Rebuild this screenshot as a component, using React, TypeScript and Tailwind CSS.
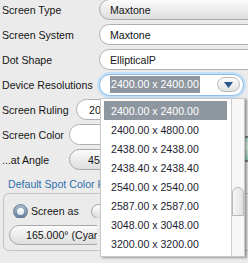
import React from "react";

const items = [
  "2400.00 x 2400.00",
  "2400.00 x 4800.00",
  "2438.00 x 2438.00",
  "2438.40 x 2438.40",
  "2540.00 x 2540.00",
  "2587.00 x 2587.00",
  "3048.00 x 3048.00",
  "3200.00 x 3200.00",
];

function Label({ children, w }: { children: React.ReactNode; w: string }) {
  return <span className={`${w} shrink-0 pl-[2px] whitespace-nowrap`}>{children}</span>;
}

export default function App() {
  return (
    <div className="relative w-[248px] h-[263px] overflow-hidden bg-[#ebebeb] text-[10.6px] leading-[14px] text-[#151515] font-['Liberation_Sans',Arial,sans-serif]">
      {/* background content partly hidden by the list */}
      <div className="absolute left-[236px] top-[136px] w-[26px] h-[26px] rounded-full border border-[#333] bg-[radial-gradient(circle_at_40%_40%,#e8f6e8,#9ed6c8_60%,#6cb8c8)]" />

      <div className="flex flex-col gap-[4px] -mt-px">
        <div className="flex items-center h-[21px]">
          <Label w="w-[99px]">Screen Type</Label>
          <div className="w-[170px] shrink-0 h-full rounded-full border border-[#a8a8a8] bg-gradient-to-b from-[#fbfbfb] to-[#dedede] flex items-center pl-[10px]">
            Maxtone
          </div>
        </div>
        <div className="flex items-center h-[21px]">
          <Label w="w-[99px]">Screen System</Label>
          <div className="w-[170px] shrink-0 h-full rounded-full border border-[#b0b0b0] bg-white flex items-center pl-[10px]">
            Maxtone
          </div>
        </div>
        <div className="flex items-center h-[21px]">
          <Label w="w-[99px]">Dot Shape</Label>
          <div className="w-[170px] shrink-0 h-full rounded-full border border-[#b0b0b0] bg-white flex items-center pl-[10px]">
            EllipticalP
          </div>
        </div>
        <div className="flex items-center h-[21px]">
          <Label w="w-[99px]">Device Resolutions</Label>
          <div className="w-[145px] shrink-0 h-[22px] rounded-full border border-[#8dbde6] shadow-[0_0_0_2px_#c4e0f6] bg-white flex items-center pl-[10px] pr-[3px]">
            <span className="bg-[#8e979f] text-white px-[1px] leading-[17px]">2400.00 x 2400.00</span>
            <div className="ml-auto w-[23px] h-[15px] rounded-full border border-[#b8b8b8] bg-gradient-to-b from-[#fdfdfd] to-[#e2e2e2] flex items-center justify-center">
              <svg width="9" height="6" viewBox="0 0 9 6">
                <path d="M0 0 H9 L4.5 6 Z" fill="#27598c" />
              </svg>
            </div>
          </div>
        </div>
        <div className="flex items-center h-[21px] w-[100px] overflow-hidden">
          <Label w="w-[76px]">Screen Ruling</Label>
          <div className="w-[190px] shrink-0 h-full rounded-full border border-[#b0b0b0] bg-white flex items-center pl-[12px]">
            20
          </div>
        </div>
        <div className="flex items-center h-[21px] w-[100px] overflow-hidden">
          <Label w="w-[69px]">Screen Color</Label>
          <div className="w-[190px] shrink-0 h-full rounded-full border border-[#b0b0b0] bg-white" />
        </div>
        <div className="flex items-center h-[21px] w-[100px] overflow-hidden">
          <Label w="w-[69px]">...at Angle</Label>
          <div className="w-[190px] shrink-0 h-full rounded-full border border-[#a8a8a8] bg-gradient-to-b from-[#fbfbfb] to-[#dedede] flex items-center pl-[18px]">
            45
          </div>
        </div>
      </div>

      <div className="mt-[7px] w-[100px] overflow-hidden pl-[8px] h-[14px] text-[#2e6fad] whitespace-nowrap">Default Spot Color Handling</div>

      <div className="mt-[2px] ml-[3px] w-[300px] h-[58px] rounded-[6px] border border-[#c4c4c4] pt-[10px] pl-[9px]">
        <div className="flex items-center h-[14px] w-[88px] overflow-hidden">
          <div className="w-[15px] h-[15px] shrink-0 rounded-full border border-[#6f8297] bg-gradient-to-b from-[#a9bccd] to-[#5f7c98] flex items-center justify-center">
            <div className="w-[7px] h-[7px] rounded-full bg-gradient-to-b from-white to-[#dfe6ee]" />
          </div>
          <span className="ml-[3px] whitespace-nowrap">Screen as</span>
          <div className="ml-[12px] w-[15px] h-[15px] shrink-0 rounded-full border border-[#a0a0a0] bg-gradient-to-b from-white to-[#dcdcdc]" />
        </div>
        <div className="mt-[7px] -ml-[4px] w-[88px] overflow-hidden">
          <div className="w-[160px] h-[20px] rounded-full border border-[#a8a8a8] bg-gradient-to-b from-[#fbfbfb] to-[#dedede] flex items-center pl-[16px] whitespace-nowrap">
            165.000° (Cyan)
          </div>
        </div>
      </div>

      {/* dropdown list */}
      <div className="absolute left-[100px] top-[98px] w-[145px] h-[159px] bg-white border border-[#c8c8c8] shadow-[2px_1px_2px_rgba(0,0,0,0.35)] flex">
        <div className="flex-1 flex flex-col pt-[2px] pl-[3px] pr-[4px]">
          {items.map((t, i) => (
            <div
              key={t}
              className={`h-[19px] shrink-0 flex items-center pl-[7px] whitespace-nowrap ${
                i === 0 ? "bg-[#8e979f] text-white" : "text-[#1d1d30]"
              }`}
            >
              {t}
            </div>
          ))}
        </div>
        <div className="w-[13px] shrink-0 border-l border-[#cfcfcf] bg-[#f7f7f7] relative">
          <div className="absolute left-[0px] top-[88px] w-[12px] h-[29px] rounded-t-full rounded-b-[2px] border border-[#b9b9b9] bg-gradient-to-r from-[#f6f6f6] to-[#e2e2e2]" />
        </div>
      </div>
    </div>
  );
}
